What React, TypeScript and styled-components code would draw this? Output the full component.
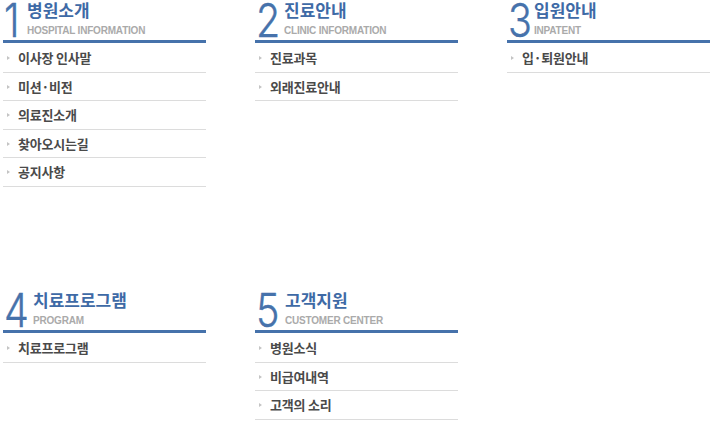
import React from "react";
import styled, { createGlobalStyle } from "styled-components";

const Global = createGlobalStyle`
  html, body { margin: 0; padding: 0; background: #ffffff; }
  body { font-family: "Noto Sans CJK KR", "Noto Sans", sans-serif; }
  * { box-sizing: border-box; }
`;

const BLUE = "#4672ab";

const Page = styled.div`
  width: 712px;
  height: 430px;
  padding-left: 3px;
  display: grid;
  grid-template-columns: repeat(3, 203px);
  grid-template-rows: 290px auto;
  column-gap: 49px;
`;

const Section = styled.section`
  display: flex;
  flex-direction: column;
`;

const Header = styled.div`
  height: 43px;
  border-bottom: 3px solid ${BLUE};
  display: flex;
  align-items: flex-start;
  padding-left: 1px;
`;

const Digit = styled.span<{ $w: number }>`
  width: ${(p) => p.$w}px;
  flex: none;
  font-family: Inter, "Open Sans", sans-serif;
  font-weight: 300;
  font-size: 47px;
  line-height: 40px;
  color: ${BLUE};
  display: inline-block;
  transform: scaleX(0.84);
  transform-origin: left center;
  -webkit-text-stroke: 0.4px ${BLUE};
`;

const Titles = styled.div`
  display: flex;
  flex-direction: column;
`;

const Title = styled.div`
  font-family: "Noto Sans CJK KR", sans-serif;
  font-weight: 700;
  font-size: 17px;
  line-height: 19px;
  color: #3e6aa6;
`;

const Sub = styled.div`
  font-family: "Liberation Sans", Arial, sans-serif;
  font-weight: 700;
  font-size: 10px;
  line-height: 12px;
  margin-top: 6px;
  color: #aaaaaa;
  letter-spacing: -0.2px;
  text-transform: uppercase;
`;

const List = styled.ul`
  list-style: none;
  margin: 1px 0 0;
  padding: 0;
`;

const Item = styled.li`
  height: 28.5px;
  border-bottom: 1px solid #dcdcdc;
  display: flex;
  align-items: center;
  padding-left: 4px;
  font-family: "Noto Sans CJK KR", sans-serif;
  font-weight: 700;
  font-size: 13px;
  color: #4a4a4a;
  letter-spacing: -0.2px;
`;

const Bullet = styled.span`
  width: 0;
  height: 0;
  border-top: 2.5px solid transparent;
  border-bottom: 2.5px solid transparent;
  border-left: 3px solid #c4c4c4;
  margin-right: 8px;
  margin-top: 1px;
  flex: none;
`;

type Sec = { n: string; w: number; title: string; sub: string; items: string[] };

const sections: Sec[] = [
  { n: "1", w: 23, title: "병원소개", sub: "Hospital Information", items: ["이사장 인사말", "미션·비전", "의료진소개", "찾아오시는길", "공지사항"] },
  { n: "2", w: 28, title: "진료안내", sub: "Clinic Information", items: ["진료과목", "외래진료안내"] },
  { n: "3", w: 26, title: "입원안내", sub: "Inpatent", items: ["입·퇴원안내"] },
  { n: "4", w: 29, title: "치료프로그램", sub: "Program", items: ["치료프로그램"] },
  { n: "5", w: 29, title: "고객지원", sub: "Customer Center", items: ["병원소식", "비급여내역", "고객의 소리"] },
];

export default function App() {
  return (
    <>
      <Global />
      <Page>
        {sections.map((s) => (
          <Section key={s.n}>
            <Header>
              <Digit $w={s.w}>{s.n}</Digit>
              <Titles>
                <Title>{s.title}</Title>
                <Sub>{s.sub}</Sub>
              </Titles>
            </Header>
            <List>
              {s.items.map((it) => (
                <Item key={it}>
                  <Bullet />
                  {it}
                </Item>
              ))}
            </List>
          </Section>
        ))}
      </Page>
    </>
  );
}
